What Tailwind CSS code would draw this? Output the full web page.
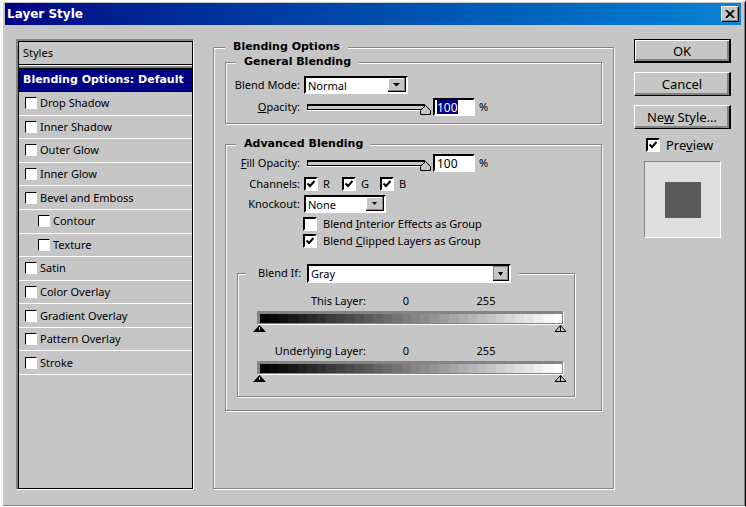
<!DOCTYPE html>
<html lang="en">
<head>
  <meta charset="UTF-8" />
  <meta name="viewport" content="width=device-width, initial-scale=1.0">
  <title>Layer Style</title>
  <script src="https://cdn.jsdelivr.net/npm/@tailwindcss/browser@4"></script>
</head>
<body class="bg-[#f7f7f7] text-black text-[11px] leading-4 font-['Noto_Sans',sans-serif]">
  <div class="flex flex-col min-h-screen ml-0.5 bg-[#c6c6c6] border-l border-t-2 border-l-white border-t-white border-r border-r-black border-b border-b-white shadow-[inset_-1px_-1px_0_#848484]">

    <!-- title bar -->
    <header class="flex items-center justify-between h-[22px] mt-px ml-0.5 mr-1 pl-0.5 pr-0.5 bg-linear-to-r from-[#000084] to-[#1084d6]">
      <h1 class="text-white font-bold text-xs font-['DejaVu_Sans',sans-serif]">Layer Style</h1>
      <button aria-label="Close" class="flex items-center justify-center w-[18px] h-4 bg-[#c6c6c6] border border-l-white border-t-white border-r-black border-b-black shadow-[inset_-1px_-1px_0_#848484]">
        <svg class="w-2.5 h-2" viewBox="0 0 10 8" stroke="#000" stroke-width="1.8"><path d="M1 0l8 8M9 0l-8 8"/></svg>
      </button>
    </header>

    <main class="flex flex-1 items-stretch pl-[13px] pr-3.5 pt-3.5 pb-[17px]">

      <!-- style list -->
      <nav class="w-[177px] shrink-0 border-t-2 border-l-2 border-t-[#848484] border-l-[#848484] shadow-[1px_1px_0_#fff]">
        <div class="h-full border border-black">
          <div class="h-[22px] pl-1 pt-[3px]">Styles</div>
          <div class="h-[5px] border-y border-black bg-[#848484] shadow-[inset_0_1px_0_#fff]"></div>
          <button class="block w-full h-[23px] pl-1 text-left bg-[#000084] text-white font-bold text-[11px] border-b border-black font-['DejaVu_Sans',sans-serif] whitespace-nowrap">Blending Options: Default</button>
          <ul id="styles" class="grid auto-rows-fr h-[283px]"></ul>
        </div>
      </nav>

      <!-- options -->
      <fieldset class="flex-1 min-w-0 mt-0.5 ml-5 mr-5 pt-[3px] px-[11px] border border-[#848484] shadow-[1px_1px_0_#fff,inset_1px_1px_0_#fff]">
        <legend class="px-2 bg-[#c6c6c6] font-bold leading-3 font-['DejaVu_Sans',sans-serif] text-[11px]">Blending Options</legend>

        <fieldset class="pt-[7px] pb-1.5 pl-2 border border-[#848484] shadow-[1px_1px_0_#fff,inset_1px_1px_0_#fff]">
          <legend class="ml-0.5 px-2 bg-[#c6c6c6] font-bold leading-3 font-['DejaVu_Sans',sans-serif] text-[11px]">General Blending</legend>
          <div class="flex items-center h-5">
            <label for="mode" class="w-[66px] text-right whitespace-nowrap">Blend Mode:</label>
            <div class="relative ml-1 w-[104px]">
              <select id="mode" class="block appearance-none w-full h-[18px] pl-0.5 bg-white border-2 border-t-black border-l-black border-r-white border-b-white">
                <option>Normal</option>
              </select>
              <svg class="absolute right-0.5 top-0.5 w-[18px] h-3.5 pointer-events-none" viewBox="0 0 18 14"><path fill="#000" d="M0 0h18v14H0z"/><path fill="#848484" d="M0 0h17v13H0z"/><path fill="#fff" d="M0 0h16v12H0z"/><path fill="#c6c6c6" d="M1 1h15v11H1z"/><path d="M5 5h7L8.500 8.500z"/></svg>
            </div>
          </div>
          <div class="flex items-center h-5 mt-0.5">
            <label for="opacity" class="w-[66px] text-right"><u>O</u>pacity:</label>
            <div class="relative ml-[7px] w-[118px] h-4">
              <input type="range" value="100" aria-label="Opacity slider" class="block appearance-none w-full h-1.5 mt-[5px] bg-[#c6c6c6] border border-t-2 border-black shadow-[0_1px_0_#fff] [&::-webkit-slider-thumb]:opacity-0">
              <svg class="absolute -right-1.5 top-1.5 w-[11px] h-2.5 pointer-events-none" viewBox="0 0 11 10"><path fill="#c6c6c6" stroke="#000" d="M.5 9.500V5.500L5.500.5l5 5v4z"/></svg>
            </div>
            <input id="opacity" type="text" value="100" class="ml-2 w-[42px] h-[18px] pl-0.5 bg-white border-2 border-t-black border-l-black border-r-white border-b-white outline-none text-xs selection:bg-[#000084] selection:text-white">
            <span class="ml-1">%</span>
          </div>
        </fieldset>

        <fieldset class="mt-3.5 pt-[3px] pb-[13px] pl-2 border border-[#848484] shadow-[1px_1px_0_#fff,inset_1px_1px_0_#fff]">
          <legend class="ml-0.5 px-2 bg-[#c6c6c6] font-bold leading-3 font-['DejaVu_Sans',sans-serif] text-[11px]">Advanced Blending</legend>
          <div class="flex items-center h-5">
            <label for="fill" class="w-[66px] text-right whitespace-nowrap"><u>F</u>ill Opacity:</label>
            <div class="relative ml-[7px] w-[118px] h-4">
              <input type="range" value="100" aria-label="Fill opacity slider" class="block appearance-none w-full h-1.5 mt-[5px] bg-[#c6c6c6] border border-t-2 border-black shadow-[0_1px_0_#fff] [&::-webkit-slider-thumb]:opacity-0">
              <svg class="absolute -right-1.5 top-1.5 w-[11px] h-2.5 pointer-events-none" viewBox="0 0 11 10"><path fill="#c6c6c6" stroke="#000" d="M.5 9.500V5.500L5.500.5l5 5v4z"/></svg>
            </div>
            <input id="fill" type="text" value="100" class="ml-2 w-[42px] h-[18px] pl-0.5 bg-white border-2 border-t-black border-l-black border-r-white border-b-white text-xs">
            <span class="ml-1">%</span>
          </div>
          <div class="flex items-center h-5 mt-px">
            <span class="w-[66px] text-right">Channels:</span>
            <div id="channels" class="flex ml-1"></div>
          </div>
          <div class="flex items-center h-5">
            <label for="knockout" class="w-[66px] text-right">Knockout:</label>
            <div class="relative ml-1 w-[82px]">
              <select id="knockout" class="block appearance-none w-full h-[18px] pl-0.5 bg-white border-2 border-t-black border-l-black border-r-white border-b-white">
                <option>None</option>
              </select>
              <svg class="absolute right-0.5 top-0.5 w-[18px] h-3.5 pointer-events-none" viewBox="0 0 18 14"><path fill="#000" d="M0 0h18v14H0z"/><path fill="#848484" d="M0 0h17v13H0z"/><path fill="#fff" d="M0 0h16v12H0z"/><path fill="#c6c6c6" d="M1 1h15v11H1z"/><path d="M6 5h5L8.500 8z"/></svg>
            </div>
          </div>
          <div id="groups" class="ml-[69px] mt-px"></div>

          <fieldset class="ml-[3px] mr-[26px] mt-3.5 pt-2.5 pb-3.5 pl-[19px] pr-[11px] border border-[#848484] shadow-[1px_1px_0_#fff,inset_1px_1px_0_#fff]">
            <legend class="flex items-center h-5 -ml-[11px] pl-3 pr-2 bg-[#c6c6c6]">
              <label for="blendif" class="w-[45px] whitespace-nowrap">Blend If:</label>
              <div class="relative ml-1 w-[204px]">
                <select id="blendif" class="block appearance-none w-full h-[19px] pl-0.5 bg-white border-2 border-t-black border-l-black border-r-white border-b-white">
                  <option>Gray</option>
                </select>
                <svg class="absolute right-0.5 top-0.5 w-4 h-[15px] pointer-events-none" viewBox="0 0 16 15"><path d="M0 0h16v15H0z"/><path fill="#848484" d="M0 0h15v14H0z"/><path fill="#c6c6c6" d="M1 1h13v12H1z"/><path d="M5 6h5L7.500 10z"/></svg>
              </div>
            </legend>
            <div>
              <div class="flex h-4"><span class="w-[109px] text-right">This Layer:</span><span class="w-20 text-center">0</span><span class="w-20 text-center">255</span></div>
              <div class="bar flex h-[13px] mt-0.5 border-t-[3px] border-l-[3px] border-r border-b border-[#848484] shadow-[1px_1px_0_#fff]"></div>
              <div class="flex justify-between -ml-1 -mr-1 mt-px">
                <svg class="w-[13px] h-[7px]" viewBox="0 0 13 7"><path d="M6.500 0L13 7H0z"/><path stroke="#c6c6c6" d="M6.500 2v3"/></svg>
                <svg class="w-[13px] h-[7px]" viewBox="0 0 13 7"><path fill="#c6c6c6" stroke="#000" d="M6.500.5L12 6.500H1zM6.500 1v5"/></svg>
              </div>
            </div>
            <div class="mt-[11px]">
              <div class="flex h-4"><span class="w-[109px] text-right">Underlying Layer:</span><span class="w-20 text-center">0</span><span class="w-20 text-center">255</span></div>
              <div class="bar flex h-[13px] mt-0.5 border-t-[3px] border-l-[3px] border-r border-b border-[#848484] shadow-[1px_1px_0_#fff]"></div>
              <div class="flex justify-between -ml-1 -mr-1 mt-px">
                <svg class="w-[13px] h-[7px]" viewBox="0 0 13 7"><path d="M6.500 0L13 7H0z"/><path stroke="#c6c6c6" d="M6.500 2v3"/></svg>
                <svg class="w-[13px] h-[7px]" viewBox="0 0 13 7"><path fill="#c6c6c6" stroke="#000" d="M6.500.5L12 6.500H1zM6.500 1v5"/></svg>
              </div>
            </div>
          </fieldset>
        </fieldset>
      </fieldset>

      <!-- buttons and preview -->
      <aside class="w-[97px] shrink-0 text-[13px]">
        <button class="block w-full h-6 border border-r-2 border-b-2 border-black shadow-[inset_1px_1px_0_#fff,inset_-2px_-2px_0_#848484]">OK</button>
        <button class="block w-full h-6 mt-[9px] border border-t-white border-l-white border-r-2 border-r-black border-b-black shadow-[inset_-2px_-2px_0_#848484]">Cancel</button>
        <button class="block w-full h-6 mt-[9px] border border-t-white border-l-white border-r-2 border-r-black border-b-black shadow-[inset_-2px_-2px_0_#848484]">Ne<u>w</u> Style...</button>
        <div id="preview" class="ml-3 mt-[7px]"></div>
        <div class="flex items-center justify-center w-[77px] h-[77px] ml-2.5 mt-2 bg-[#dedede] border border-t-[#848484] border-l-[#848484] border-r-white border-b-white">
          <div class="w-9 h-9 bg-[#5a5a5a]"></div>
        </div>
      </aside>
    </main>
  </div>

  <script>
    // checkbox with its label, html allowed in the text
    function check(text, on, cls) {
      return `<label class="flex items-center ${cls}">
        <span class="relative shrink-0">
          <input type="checkbox" ${on ? 'checked' : ''} class="peer block appearance-none w-3.5 h-3.5 bg-white border-2 border-t-black border-l-black border-r-white border-b-white">
          <svg class="absolute left-[3px] top-[3px] w-2 h-2 hidden peer-checked:block pointer-events-none" viewBox="0 0 8 8"><path fill="none" stroke="#000" stroke-width="2" d="M.5 3.500L3 6l4.500-5"/></svg>
        </span>
        <span>${text}</span>
      </label>`;
    }

    // small checkbox used in the style list
    function styleRow(text, sub) {
      return `<li class="flex items-center border-b border-white ${sub ? 'pl-[19px]' : 'pl-1.5'}">
        <label class="flex items-center gap-[3px]">
          <input type="checkbox" class="block appearance-none w-3 h-3 bg-white border border-t-black border-l-black border-r-white border-b-white">${text}
        </label>
      </li>`;
    }

    const styles = ['Drop Shadow', 'Inner Shadow', 'Outer Glow', 'Inner Glow', 'Bevel and Emboss', 'Contour',
      'Texture', 'Satin', 'Color Overlay', 'Gradient Overlay', 'Pattern Overlay', 'Stroke'];
    document.getElementById('styles').innerHTML =
      styles.map(s => styleRow(s, s === 'Contour' || s === 'Texture')).join('');

    document.getElementById('channels').innerHTML =
      ['R', 'G', 'B'].map(c => check(c, true, 'gap-[5px] w-[38px]')).join('');
    document.getElementById('groups').innerHTML =
      check('Blend <u>I</u>nterior Effects as Group', false, 'gap-1.5 h-[17px]') +
      check('Blend <u>C</u>lipped Layers as Group', true, 'gap-1.5 h-[17px]');
    document.getElementById('preview').innerHTML = check('Pre<u>v</u>iew', true, 'gap-1.5 h-[17px]');

    // gray ramps
    const steps = 32;
    document.querySelectorAll('.bar').forEach(bar => {
      for (let i = 0; i < steps; i++) {
        const v = Math.round(i * 255 / (steps - 1));
        const cell = document.createElement('span');
        cell.className = 'flex-1';
        cell.style.background = `rgb(${v},${v},${v})`;
        bar.appendChild(cell);
      }
    });

    document.getElementById('opacity').select();
  </script>
</body>
</html>
